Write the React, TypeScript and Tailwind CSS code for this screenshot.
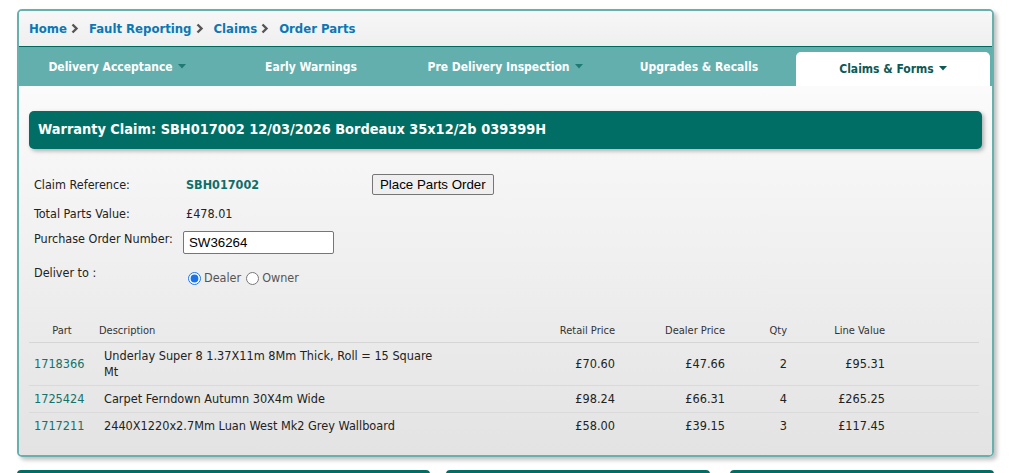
import React from "react";

const Chevron = () => (
  <svg width="8" height="11" viewBox="0 0 8 11" className="ml-[4px] mr-[6px] inline-block">
    <path d="M1.5 1.5 L5.5 5.5 L1.5 9.5" stroke="#555" strokeWidth="2.4" fill="none" />
  </svg>
);

const Caret = ({ color }: { color: string }) => (
  <svg width="8" height="5" viewBox="0 0 8 5" className="ml-[5px] inline-block">
    <path d="M0 0 L8 0 L4 4.5 Z" fill={color} />
  </svg>
);

const rows = [
  { part: "1718366", desc: "Underlay Super 8 1.37X11m 8Mm Thick, Roll = 15 Square Mt", retail: "£70.60", dealer: "£47.66", qty: "2", line: "£95.31" },
  { part: "1725424", desc: "Carpet Ferndown Autumn 30X4m Wide", retail: "£98.24", dealer: "£66.31", qty: "4", line: "£265.25" },
  { part: "1717211", desc: "2440X1220x2.7Mm Luan West Mk2 Grey Wallboard", retail: "£58.00", dealer: "£39.15", qty: "3", line: "£117.45" },
];

export default function App() {
  const font = { fontFamily: "'DejaVu Sans', Verdana, sans-serif", fontStretch: "condensed" } as React.CSSProperties;
  return (
    <div className="w-[1036px] h-[473px] bg-white overflow-hidden relative" style={font}>
      <div className="ml-[17px] mt-[9px] w-[977px] border-2 border-[#66b1ae] rounded-[5px] shadow-[3px_3px_4px_rgba(0,0,0,0.25)] overflow-hidden">
        <div className="h-[36px] bg-gradient-to-b from-[#f7f7f7] to-[#efefef] border-b border-[#00695f] flex items-center pl-[10px] text-[13px] font-bold text-[#0b78b5]">
          <span>Home</span><Chevron />
          <span className="ml-[4px]">Fault Reporting</span><Chevron />
          <span className="ml-[4px]">Claims</span><Chevron />
          <span className="ml-[4px]">Order Parts</span>
        </div>
        <div className="h-[39px] bg-[#63afae] flex pl-[1px] items-end">
          {[
            { t: "Delivery Acceptance", c: true },
            { t: "Early Warnings", c: false },
            { t: "Pre Delivery Inspection", c: true },
            { t: "Upgrades & Recalls", c: false },
          ].map((n) => (
            <div key={n.t} className="w-[194px] h-[39px] flex items-center justify-center text-white text-[12px] font-bold">
              {n.t}
              {n.c && <Caret color="#1f7a74" />}
            </div>
          ))}
          <div className="w-[194px] h-[34px] bg-white rounded-t-[5px] flex items-center justify-center text-[#0c5a55] text-[12px] font-bold pb-[1px]">
            Claims &amp; Forms<Caret color="#0c5a55" />
          </div>
        </div>
        <div className="bg-gradient-to-b from-[#fbfbfb] to-[#e3e3e3] px-[10px] pt-[25px] pb-[16px]">
          <div className="h-[38px] bg-[#006e64] rounded-[5px] shadow-[2px_2px_4px_rgba(0,0,0,0.3)] flex items-center pl-[9px] text-white text-[14.4px] font-bold">
            Warranty Claim: SBH017002 12/03/2026 Bordeaux 35x12/2b 039399H
          </div>
          <div className="mt-[24px] pl-[5px] text-[12.5px] text-[#222]">
            <div className="flex items-center h-[24px]">
              <div className="w-[152px]">Claim Reference:</div>
              <div className="w-[186px] font-bold text-[#0f6f68]">SBH017002</div>
              <button className="h-[21px] px-[7px] border border-[#767676] rounded-[2px] bg-[#efefef] text-[13.3px] text-black -mt-[2px]" style={{ fontFamily: "'Liberation Sans', Arial, sans-serif" }}>
                Place Parts Order
              </button>
            </div>
            <div className="flex items-center h-[20px] mt-[7px]">
              <div className="w-[152px]">Total Parts Value:</div>
              <div>£478.01</div>
            </div>
            <div className="flex items-start h-[24px] mt-[7px]">
              <div className="w-[149px] leading-[16px]">Purchase Order Number:</div>
              <input
                defaultValue="SW36264"
                className="w-[151px] h-[23px] border border-[#767676] rounded-[2px] bg-white px-[5px] text-[13.3px] text-black"
                style={{ fontFamily: "'Liberation Sans', Arial, sans-serif" }}
              />
            </div>
            <div className="flex h-[30px] mt-[6px]">
              <div className="w-[154px] pt-[3px]">Deliver to :</div>
              <div className="flex items-center h-[22px] mt-[6px] text-[#555]">
                <input type="radio" defaultChecked name="d" className="w-[13px] h-[13px] m-0 mr-[3px] accent-[#1a73e8]" />
                <span>Dealer</span>
                <input type="radio" name="d" className="w-[13px] h-[13px] m-0 ml-[5px] mr-[3px]" />
                <span>Owner</span>
              </div>
            </div>
          </div>
          <table className="mt-[30px] w-[950px] border-collapse text-[#222]">
            <thead>
              <tr className="text-[11px] text-[#333] border-b border-[#d6d6d6]">
                <th className="w-[64px] h-[21px] align-top leading-[19px] font-normal text-center pl-[2px]">Part</th>
                <th className="w-[350px] align-top leading-[19px] font-normal text-left pl-[6px]">Description</th>
                <th className="w-[172px] align-top leading-[19px] font-normal text-right">Retail Price</th>
                <th className="w-[110px] align-top leading-[19px] font-normal text-right">Dealer Price</th>
                <th className="w-[62px] align-top leading-[19px] font-normal text-right">Qty</th>
                <th className="w-[98px] align-top leading-[19px] font-normal text-right">Line Value</th>
                <th></th>
              </tr>
            </thead>
            <tbody className="text-[12.6px] leading-[16px]">
              {rows.map((r) => (
                <tr key={r.part} className="border-b border-[#dadada] last:border-b-0">
                  <td className="text-[#11736b] pl-[5px] py-[5px] align-middle">{r.part}</td>
                  <td className="pl-[11px] py-[5px] pr-[2px]">{r.desc}</td>
                  <td className="text-right">{r.retail}</td>
                  <td className="text-right">{r.dealer}</td>
                  <td className="text-right">{r.qty}</td>
                  <td className="text-right">{r.line}</td>
                  <td></td>
                </tr>
              ))}
            </tbody>
          </table>
        </div>
      </div>
      <div className="absolute top-[470px] left-[17px] w-[413px] h-[10px] bg-[#006e64] rounded-t-[4px]"></div>
      <div className="absolute top-[470px] left-[446px] w-[264px] h-[10px] bg-[#006e64] rounded-t-[4px]"></div>
      <div className="absolute top-[470px] left-[730px] w-[264px] h-[10px] bg-[#006e64] rounded-t-[4px]"></div>
    </div>
  );
}
